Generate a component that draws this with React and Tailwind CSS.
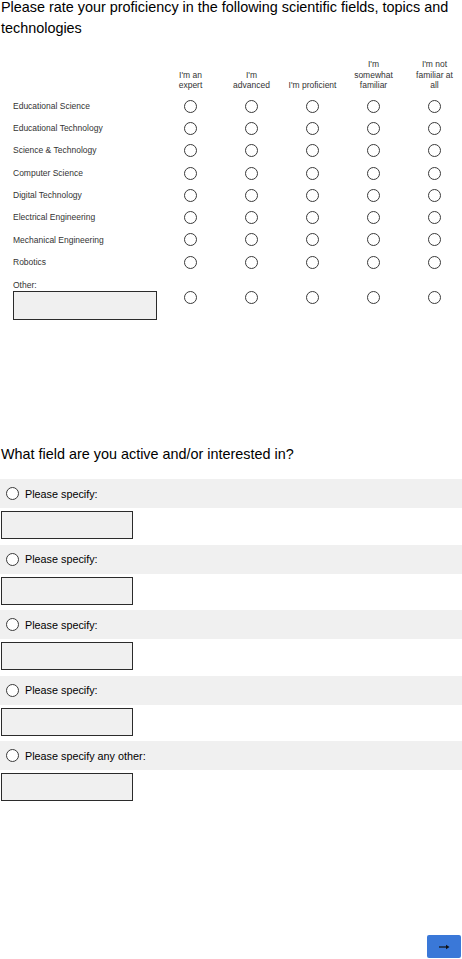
import React from "react";

const rows = [
  "Educational Science",
  "Educational Technology",
  "Science & Technology",
  "Computer Science",
  "Digital Technology",
  "Electrical Engineering",
  "Mechanical Engineering",
  "Robotics",
];

const headers = [
  ["I'm an", "expert"],
  ["I'm", "advanced"],
  ["I'm proficient"],
  ["I'm", "somewhat", "familiar"],
  ["I'm not", "familiar at", "all"],
];

function Radio({ className = "" }) {
  return (
    <span
      className={
        "block w-[13px] h-[13px] rounded-full border border-[#3a3a3a] bg-white " +
        className
      }
    />
  );
}

function RadioRow({ label }) {
  return (
    <>
      <span className="pl-[13px]">{label}</span>
      {headers.map((_, i) => (
        <div key={i} className="flex justify-center items-center">
          <Radio />
        </div>
      ))}
    </>
  );
}

function SpecifyBlock({ label }) {
  return (
    <div className="flex flex-col gap-[3px]">
      <div className="h-[29px] bg-[#f0f0f0] flex items-center pl-[6px] gap-[6px] text-[10.8px]">
        <Radio />
        <span>{label}</span>
      </div>
      <div className="ml-[1px] w-[132px] h-[28px] bg-[#f0f0f0] border-[1.5px] border-[#2b2b2b]" />
    </div>
  );
}

export default function App() {
  return (
    <div className="w-[462px] min-h-[959px] flex flex-col font-['Liberation_Sans',Arial,sans-serif] text-black bg-white">
      <h1 className="pl-[1px] -mt-[3px] text-[14.4px] leading-[21px]">
        Please rate your proficiency in the following scientific fields, topics and technologies
      </h1>

      <div className="mt-[20px] grid grid-cols-[160px_repeat(5,61px)] text-[8.5px] leading-[10.5px] text-[#333]">
        <div />
        {headers.map((h, i) => (
          <div key={i} className="flex flex-col justify-end items-center text-center">
            {h.map((l, j) => (
              <span key={j}>{l}</span>
            ))}
          </div>
        ))}
      </div>

      <div className="mt-[4.5px] grid grid-cols-[160px_repeat(5,61px)] auto-rows-[22.3px] items-center text-[8.5px] text-[#333]">
        {rows.map((r) => (
          <RadioRow key={r} label={r} />
        ))}
      </div>

      <div className="mt-[6.5px] grid grid-cols-[160px_repeat(5,61px)] items-start text-[8.5px] text-[#333]">
        <div className="pl-[13px] flex flex-col gap-[1px]">
          <span className="leading-[10px]">Other:</span>
          <div className="w-[144px] h-[29px] bg-[#f0f0f0] border-[1.5px] border-[#2b2b2b]" />
        </div>
        {headers.map((_, i) => (
          <div key={i} className="flex justify-center pt-[11.5px]">
            <Radio />
          </div>
        ))}
      </div>

      <h2 className="pl-[1px] mt-[124.5px] text-[14.4px] leading-[21px]">
        What field are you active and/or interested in?
      </h2>

      <div className="mt-[14px] flex flex-col gap-[5.5px]">
        <SpecifyBlock label="Please specify:" />
        <SpecifyBlock label="Please specify:" />
        <SpecifyBlock label="Please specify:" />
        <SpecifyBlock label="Please specify:" />
        <SpecifyBlock label="Please specify any other:" />
      </div>

      <div className="mt-auto flex justify-end pr-[1px] pb-[1px]">
        <button
          aria-label="Next"
          className="w-[34px] h-[23px] rounded-[2px] bg-[#3a78d8] flex items-center justify-center"
        >
          <svg width="11" height="6" viewBox="0 0 11 6" fill="none">
            <path d="M0 3H9" stroke="#111" strokeWidth="1.2" />
            <path d="M7 0.8L10.5 3L7 5.2Z" fill="#111" />
          </svg>
        </button>
      </div>
    </div>
  );
}
